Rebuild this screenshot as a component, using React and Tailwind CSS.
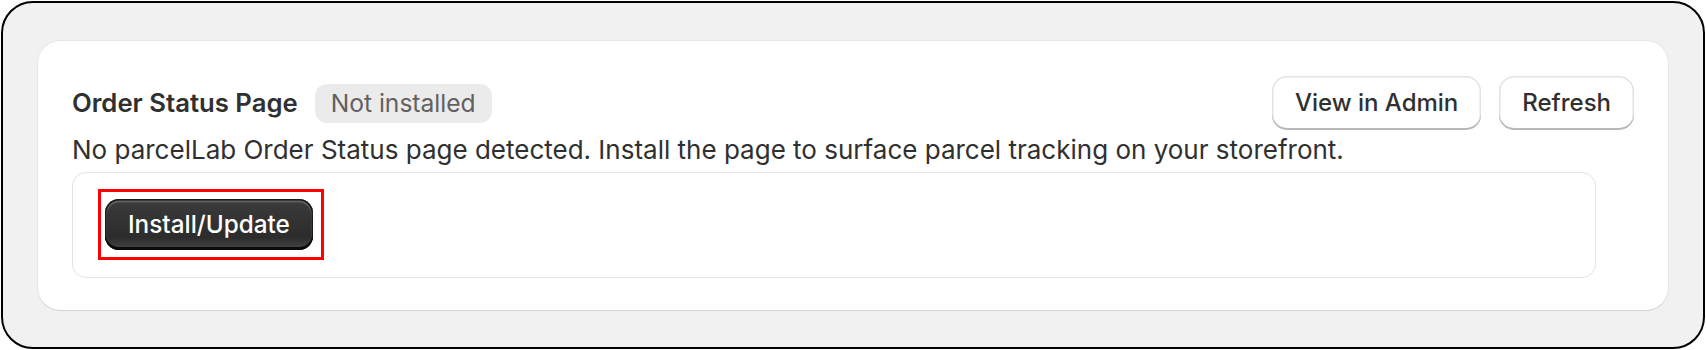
export default function App() {
  return (
    <div className="w-[1706px] h-[350px] bg-white p-[1px] font-['Inter',sans-serif]">
      <div className="h-full rounded-[32px] border-2 border-black bg-[#f1f1f1] pt-[38px] pl-[35px] pr-[35px]">
        <div className="rounded-[22px] bg-white px-[34px] pt-[35px] pb-[32px] shadow-[0_1px_0_#d4d4d4,0_0_0_1px_#e6e6e6]">
          <div className="flex items-center justify-between h-[54px]">
            <div className="flex items-center gap-[17px]">
              <h2 className="text-[25.7px] font-semibold text-[#303030]">Order Status Page</h2>
              <span className="rounded-[12px] bg-[#ebebeb] px-[16px] h-[39px] flex items-center text-[24.6px] text-[#616161]">
                Not installed
              </span>
            </div>
            <div className="flex items-center gap-[18px]">
              <button className="h-[54px] rounded-[15px] bg-white px-[23px] text-[24px] font-medium text-[#303030] shadow-[inset_0_-2px_0_#b8b8b8,inset_0_0_0_1.5px_#e3e3e3]">
                View in Admin
              </button>
              <button className="h-[54px] rounded-[15px] bg-white px-[23px] text-[24px] font-medium text-[#303030] shadow-[inset_0_-2px_0_#b8b8b8,inset_0_0_0_1.5px_#e3e3e3]">
                Refresh
              </button>
            </div>
          </div>
          <p className="mt-[5px] text-[26px] leading-[30px] text-[#303030]">
            No parcelLab Order Status page detected. Install the page to surface parcel tracking on your storefront.
          </p>
          <div className="mt-[7px] w-[1524px] rounded-[14px] border-[1.5px] border-[#e3e3e3] px-[32px] pt-[26px] pb-[27px]">
            <div className="relative inline-block">
              <button className="h-[51px] rounded-[14px] bg-[linear-gradient(#3b3b3b,#2c2c2c_75%,#474747)] px-[23px] text-[24.3px] font-medium text-white shadow-[inset_0_-3px_0_#0a0a0a,inset_0_0_0_1.5px_#1a1a1a,inset_0_1.5px_0_2px_#ffffff30]">
                Install/Update
              </button>
              <div className="pointer-events-none absolute -left-[7px] -top-[10px] -right-[11px] -bottom-[10px] border-[3px] border-[#ff0000]" />
            </div>
          </div>
        </div>
      </div>
    </div>
  );
}
